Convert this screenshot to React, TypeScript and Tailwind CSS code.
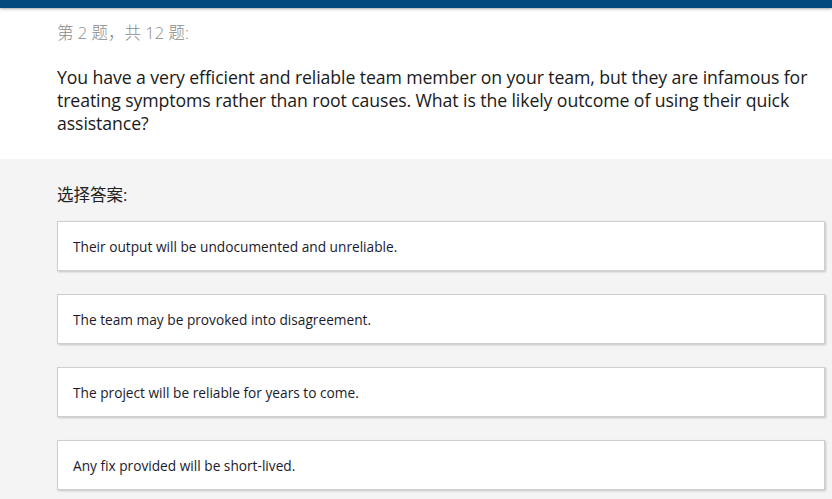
import React from "react";

const options = [
  "Their output will be undocumented and unreliable.",
  "The team may be provoked into disagreement.",
  "The project will be reliable for years to come.",
  "Any fix provided will be short-lived.",
];

export default function App() {
  return (
    <div className="w-[832px] h-[499px] overflow-hidden bg-[#f4f4f4] flex flex-col" style={{ fontFamily: '"Open Sans", "Noto Sans CJK SC", sans-serif' }}>
      <div className="h-[8px] bg-[#044a7c] shrink-0 shadow-[0_1px_3px_rgba(0,0,0,0.35)] relative z-10" />
      <div className="bg-white pl-[57px] pr-[8px] pt-[13px] pb-[24px] shrink-0">
        <div className="text-[16.5px] leading-[24px] text-[#8a8a8a] font-light">第 2 题，共 12 题:</div>
        <div className="mt-[21px] text-[17.7px] leading-[23px] text-[#1a1a1a] tracking-[-0.1px]">
          You have a very efficient and reliable team member on your team, but they are infamous for treating symptoms rather than root causes. What is the likely outcome of using their quick assistance?
        </div>
      </div>
      <div className="pl-[57px] pr-[7px] pt-[24px] flex flex-col">
        <div className="text-[16.5px] leading-[24px] text-[#222]">选择答案:</div>
        <div className="mt-[14px] flex flex-col gap-[23px]">
          {options.map((o) => (
            <div key={o} className="h-[50px] bg-white border border-[#cfcfcf] shadow-[1px_1px_2px_rgba(0,0,0,0.2)] flex items-center px-[15px] pt-[2px] text-[13.7px] text-[#1a1a2a]">
              {o}
            </div>
          ))}
        </div>
      </div>
    </div>
  );
}
